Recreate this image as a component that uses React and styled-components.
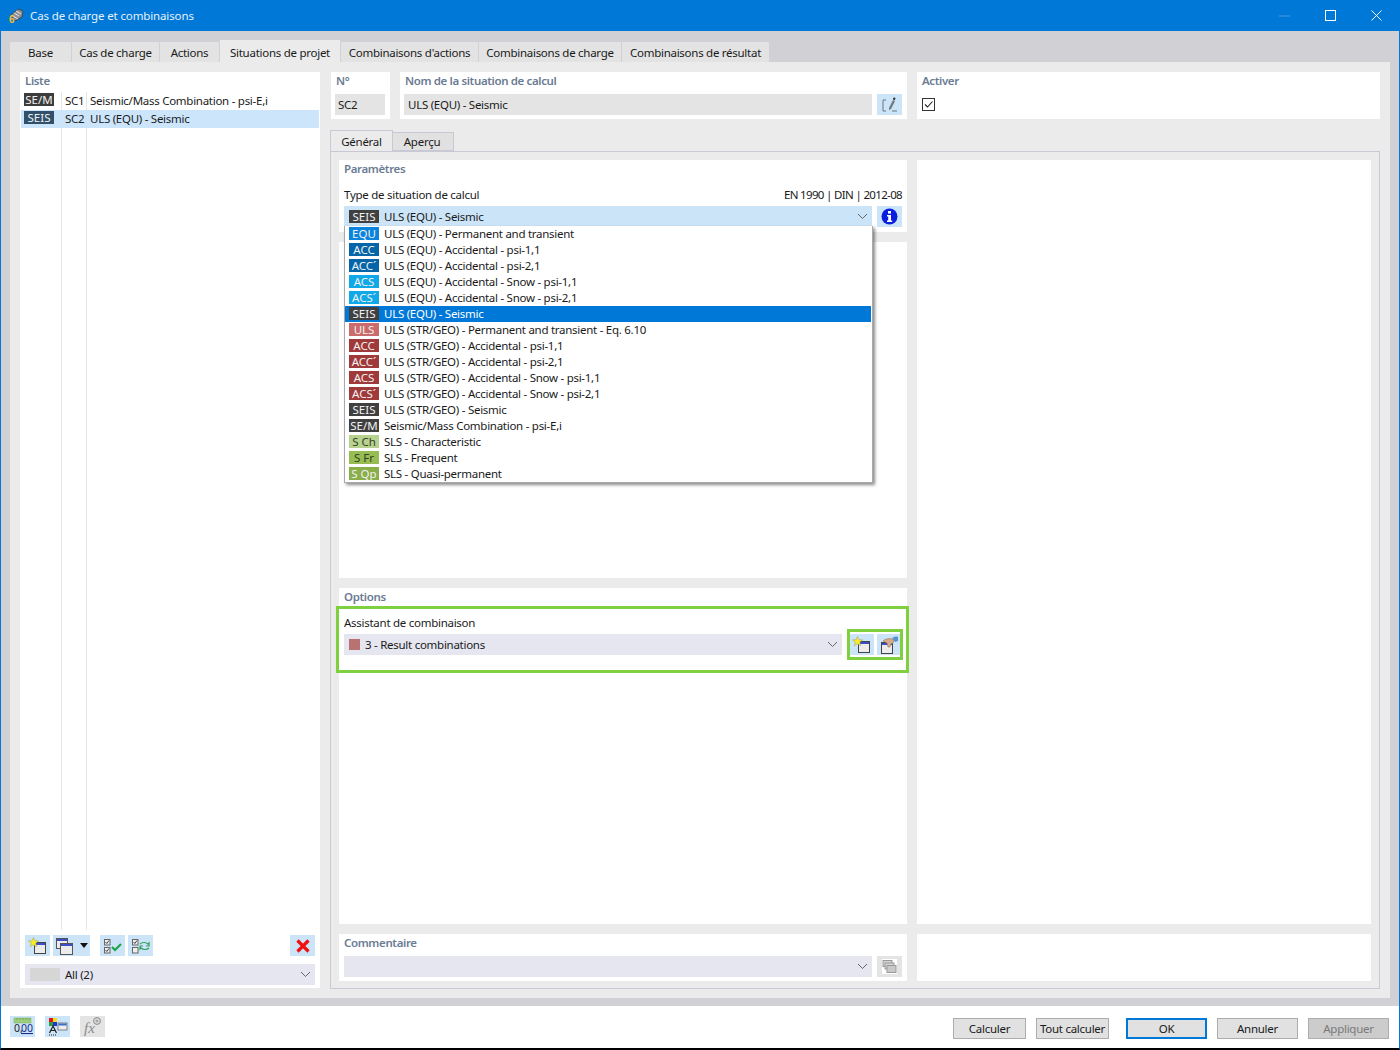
import React from "react";
import styled, { createGlobalStyle } from "styled-components";

const GlobalStyle = createGlobalStyle`
  html, body { margin: 0; padding: 0; background: #fff; }
  body { font-family: "Noto Sans", "Open Sans", sans-serif; font-size: 11.5px; letter-spacing: -0.27px; color: #1a1a1a; }
  * { box-sizing: border-box; }
  svg text { letter-spacing: 0; }
`;

const Window = styled.div`
  width: 1400px;
  height: 1050px;
  display: flex;
  flex-direction: column;
  border-left: 1px solid #0078d7;
  border-right: 1px solid #0078d7;
  border-bottom: 2px solid #000;
  background: #fff;
  overflow: hidden;
`;

const TitleBar = styled.div`
  height: 31px;
  flex: none;
  display: flex;
  align-items: center;
  background: #0078d7;
  color: #e6f1fb;
  letter-spacing: -0.13px;
  padding-left: 7px;
  gap: 5px;
`;

const TitleText = styled.span`
  flex: 1;
`;

const WinControls = styled.div`
  display: flex;
  align-items: center;
`;

const WinButton = styled.div`
  width: 46px;
  height: 31px;
  display: flex;
  align-items: center;
  justify-content: center;
`;

const Body = styled.div`
  flex: 1;
  display: flex;
  flex-direction: column;
  background: #d1d0d4;
  padding: 9px 9px 8px 9px;
  min-height: 0;
`;

const TabBar = styled.div`
  height: 22px;
  flex: none;
  display: flex;
  align-items: flex-end;
  gap: 1px;
`;

const Tab = styled.div`
  width: ${({ $w }) => $w}px;
  height: ${({ $active }) => ($active ? 22 : 20)}px;
  padding-top: ${({ $active }) => ($active ? 2 : 0)}px;
  background: ${({ $active }) => ($active ? "#ebebeb" : "#e3e3e3")};
  display: flex;
  align-items: center;
  justify-content: center;
`;

const Panel = styled.div`
  flex: 1;
  display: flex;
  gap: 10px;
  background: #ebebeb;
  padding: 10px 10px 9px 10px;
  min-height: 0;
`;

const Card = styled.div`
  background: #fff;
  display: flex;
  flex-direction: column;
  min-height: 0;
`;

const ListCard = styled(Card)`
  width: 300px;
  flex: none;
  margin-bottom: 1px;
`;

const GroupLabel = styled.div`
  height: 20px;
  flex: none;
  padding: 2px 0 0 5px;
  line-height: 14px;
  font-weight: 600;
  letter-spacing: -0.37px;
  color: #6b7b93;
`;

const ListArea = styled.div`
  flex: 1;
  margin: 0 1px;
  background-image:
    linear-gradient(#e6e6e6, #e6e6e6),
    linear-gradient(#e6e6e6, #e6e6e6);
  background-size: 1px 100%, 1px 100%;
  background-position: 40px 0, 65px 0;
  background-repeat: no-repeat;
`;

const ListRow = styled.div`
  height: 18px;
  padding-top: 1px;
  display: grid;
  grid-template-columns: 44px 25px 1fr;
  align-items: start;
  line-height: 16px;
  background: ${({ $selected }) => ($selected ? "#cce5fb" : "transparent")};
`;

const Badge = styled.span`
  width: 30px;
  height: 13px;
  flex: none;
  margin-left: ${({ $inset }) => $inset || 0}px;
  display: inline-flex;
  align-items: center;
  justify-content: center;
  background: ${({ $bg }) => $bg};
  color: ${({ $dark }) => ($dark ? "#33402a" : "#f2f2f2")};
  letter-spacing: 0;
  line-height: 13px;
  white-space: nowrap;
`;

const DropBadge = styled(Badge)`
  align-self: flex-start;
  margin-top: 1px;
`;

const ListToolbar = styled.div`
  flex: none;
  display: flex;
  align-items: center;
  gap: 3px;
  margin: 5px 5px 0;
  height: 21px;
`;

const Spacer = styled.div`
  flex: 1;
`;

const IconButton = styled.div`
  width: ${({ $w }) => $w || 25}px;
  height: 21px;
  flex: none;
  margin-left: ${({ $ml }) => $ml || 0}px;
  display: flex;
  align-items: center;
  justify-content: center;
  gap: ${({ $gap }) => $gap || 0}px;
  background: ${({ $muted }) => ($muted ? "#e4e4e4" : "#cce4f7")};
`;

const Combo = styled.div`
  height: ${({ $h }) => $h || 21}px;
  flex: 1;
  min-width: 0;
  display: flex;
  align-items: center;
  gap: 5px;
  padding: ${({ $h }) => ($h ? "1px 4px 0 5px" : "0 4px 0 5px")};
  background: ${({ $blue }) => ($blue ? "#cce4f7" : "#e6e6f0")};
`;

const ComboText = styled.span`
  flex: 1;
  line-height: 16px;
`;

const ListFilter = styled.div`
  flex: none;
  display: flex;
  margin: 8px 5px 3px;
`;

const Swatch = styled.span`
  width: ${({ $w }) => $w}px;
  height: ${({ $h }) => $h}px;
  flex: none;
  background: ${({ $bg }) => $bg};
`;

const Content = styled.div`
  flex: 1;
  display: flex;
  flex-direction: column;
  min-width: 0;
`;

const HeaderRow = styled.div`
  height: 47px;
  flex: none;
  display: flex;
  gap: 10px;
  margin-left: 1px;
`;

const NumberCard = styled(Card)`
  width: 59px;
  padding: 0 5px 0 4px;
`;

const NameCard = styled(Card)`
  width: 507px;
  padding: 0 5px 0 4px;
`;

const ActiveCard = styled(Card)`
  flex: 1;
  padding: 0 5px 0 4px;
`;

const HeaderLabel = styled(GroupLabel)`
  height: 22px;
  padding-left: 1px;
`;

const Field = styled.div`
  height: 21px;
  flex: 1;
  min-width: 0;
  display: flex;
  align-items: center;
  padding: 0 3px;
  background: #e4e4e4;
`;

const NameField = styled(Field)`
  padding-left: 4px;
`;

const FieldRow = styled.div`
  display: flex;
  gap: 5px;
`;

const CheckBox = styled.div`
  width: 13px;
  height: 13px;
  margin: 4px 0 0 1px;
  border: 1px solid #333;
  background: #fff;
  display: flex;
  align-items: center;
  justify-content: center;
`;

const SubTabBar = styled.div`
  height: 21px;
  margin-top: 11px;
  flex: none;
  display: flex;
  align-items: flex-end;
`;

const SubTab = styled.div`
  width: ${({ $w }) => $w}px;
  height: ${({ $active }) => ($active ? 21 : 19)}px;
  padding-right: ${({ $active }) => ($active ? 0 : 2)}px;
  display: flex;
  align-items: center;
  justify-content: center;
  background: ${({ $active }) => ($active ? "#ebebeb" : "#e1e1e1")};
  border: 1px solid #c9c9d6;
  border-bottom: ${({ $active }) => ($active ? "none" : "1px solid #c9c9d6")};
  border-left: ${({ $active }) => ($active ? "1px solid #c9c9d6" : "none")};
`;

const SubPanel = styled.div`
  flex: 1;
  display: grid;
  grid-template-columns: 568px 454px;
  grid-template-rows: 1fr 47px;
  gap: 10px;
  padding: 8px 8px 7px;
  border: 1px solid #c9c9d6;
  min-height: 0;
`;

const LeftStack = styled.div`
  display: flex;
  flex-direction: column;
  gap: 10px;
  min-height: 0;
`;

const ParamCard = styled(Card)`
  height: 72px;
  flex: none;
  position: relative;
  padding: 0 5px;
`;

const SectionLabel = styled(GroupLabel)`
  padding-left: 0;
  height: 27px;
`;

const ParamHead = styled.div`
  display: flex;
  justify-content: space-between;
  height: 19px;
  line-height: 16px;
`;

const NormText = styled.span`
  letter-spacing: -0.66px;
`;

const BlankCard = styled(Card)`
  height: 336px;
  flex: none;
`;

const OptionsCard = styled(Card)`
  flex: 1;
`;

const OptionsLabel = styled(GroupLabel)`
  height: 18px;
`;

const GreenFrame = styled.div`
  height: 67px;
  margin: 0 -2px 0 -3px;
  border: 3px solid #7fd03f;
  padding: 5px 3px 0 5px;
`;

const FrameLabel = styled.div`
  height: 20px;
  line-height: 18px;
`;

const FrameRow = styled.div`
  display: flex;
  align-items: center;
  gap: 5px;
`;

const GreenButtons = styled.div`
  flex: none;
  display: flex;
  gap: 3px;
  padding: 2px 0;
  margin: -5px 0;
  border: 3px solid #7fd03f;
`;

const CommentCard = styled(Card)`
  padding: 0 5px;
`;

const CommentLabel = styled(GroupLabel)`
  height: 22px;
  padding-left: 0;
`;

const DropList = styled.div`
  position: absolute;
  left: 5px;
  top: 66px;
  width: 529px;
  height: 257px;
  z-index: 5;
  background: #fff;
  border: 1px solid #a9a9a9;
  border-top: none;
  box-shadow: 2px 2px 3px rgba(0, 0, 0, 0.45);
`;

const DropRow = styled.div`
  height: 16px;
  display: flex;
  align-items: center;
  gap: 5px;
  padding-left: 4px;
  margin-right: 1px;
  background: ${({ $selected }) => ($selected ? "#0078d7" : "transparent")};
  color: ${({ $selected }) => ($selected ? "#fff" : "#1a1a1a")};
  line-height: 16px;
`;

const Footer = styled.div`
  height: 42px;
  flex: none;
  display: flex;
  align-items: center;
  padding: 0 10px 0 9px;
  background: #fff;
`;

const FooterIcons = styled.div`
  display: flex;
  gap: 10px;
  flex: 1;
  margin-top: -2px;
`;

const FooterButtons = styled.div`
  display: flex;
  margin-top: 2px;
`;

const Button = styled.div`
  width: ${({ $w }) => $w}px;
  height: 21px;
  margin-left: ${({ $ml }) => $ml}px;
  display: flex;
  align-items: center;
  justify-content: center;
  background: ${({ $disabled }) => ($disabled ? "#cccccc" : "#e1e1e1")};
  color: ${({ $disabled }) => ($disabled ? "#7a7a7a" : "#1a1a1a")};
  border: ${({ $primary }) => ($primary ? "2px solid #0078d7" : "1px solid #adadad")};
`;

const Chevron = () => (
  <svg width="11" height="7" viewBox="0 0 11 7">
    <path d="M1 1l4.5 4.5L10 1" fill="none" stroke="#666" strokeWidth="1" />
  </svg>
);

const AppIcon = () => (
  <svg width="17" height="18" viewBox="0 0 17 18">
    <path d="M3 8l7-6 5 2-1 6-7 4z" fill="#8b8f98" stroke="#3d3d3d" strokeWidth="0.8" />
    <path d="M6 6l5 3M8 4l5 3M5 9l5 3" stroke="#e5e5e5" strokeWidth="1" />
    <text x="1" y="16" fontSize="10" fontWeight="700" fill="#f2c230" fontFamily="Liberation Sans, sans-serif">6</text>
  </svg>
);

const MiniWindow = ({ x = 0, y = 0, w = 11, h = 11, bar = "#3d4fc4", stroke = "#444" }) => (
  <g>
    <rect x={x + 0.5} y={y + 0.5} width={w} height={h} fill="#ececec" stroke={stroke} />
    <rect x={x + 1} y={y + 1} width={w - 1} height="2" fill={bar} />
  </g>
);

const Star = () => (
  <path d="M5.5 0.5l1.4 3.2 3.6.2-2.8 2.3 1 3.5-3.2-1.9-3.2 1.9 1-3.5L.5 3.9l3.6-.2z" fill="#f8ee20" stroke="#9a9a70" strokeWidth="0.5" />
);

const NewWindowIcon = () => (
  <svg width="20" height="18" viewBox="0 0 20 18">
    <MiniWindow x={6} y={5} w={11} h={11} />
    <Star />
  </svg>
);

const CopyWindowIcon = () => (
  <svg width="18" height="18" viewBox="0 0 18 18">
    <MiniWindow x={1} y={1} w={11} h={10} stroke="#555" />
    <MiniWindow x={5} y={6} w={12} h={11} stroke="#555" />
  </svg>
);

const HandWindowIcon = () => (
  <svg width="20" height="18" viewBox="0 0 20 18">
    <path d="M13 2c2-1 4-2 6-1v4l-3 1z" fill="#5b93cf" />
    <MiniWindow x={2} y={6} w={11} h={11} />
    <path d="M4 5c2-2 6-3 9-2l2 1-1 3-2 1-1 3H9L8 7z" fill="#d7ab8c" stroke="#8a6a55" strokeWidth="0.5" />
  </svg>
);

const MiniCheck = ({ y, on = true }) => (
  <g>
    <rect x="1.5" y={y + 0.5} width="5.5" height="5.5" fill="#eee" stroke="#666" />
    {on && <path d={`M2.5 ${y + 3}l1.3 1.5L6 ${y + 1.5}`} fill="none" stroke="#333" strokeWidth="0.9" />}
  </g>
);

const CheckAllIcon = () => (
  <svg width="20" height="16" viewBox="0 0 20 16">
    <MiniCheck y={1} />
    <MiniCheck y={9} />
    <path d="M9 9l3 3 6-6" fill="none" stroke="#1aa548" strokeWidth="2.2" />
  </svg>
);

const SwapCheckIcon = () => (
  <svg width="20" height="16" viewBox="0 0 20 16">
    <MiniCheck y={1} />
    <MiniCheck y={9} on={false} />
    <path d="M9 6c2-2 6-2 8 0l1-1v3h-3M18 10c-2 2-6 2-8 0l-1 1V8h3" fill="none" stroke="#2f9e5a" strokeWidth="1.2" />
  </svg>
);

const DeleteIcon = () => (
  <svg width="14" height="14" viewBox="0 0 14 14">
    <path d="M1.5 1.5l11 11M12.5 1.5l-11 11" stroke="#f01010" strokeWidth="3.2" />
  </svg>
);

const EditIcon = () => (
  <svg width="18" height="16" viewBox="0 0 18 16">
    <path d="M5 3H2v11h3M11 14h5" fill="none" stroke="#6b7680" strokeWidth="1" />
    <path d="M12 3l2 1-4 8-2 1 0-2z" fill="#70787f" />
    <circle cx="13.2" cy="1.8" r="1.2" fill="#333" />
  </svg>
);

const InfoIcon = () => (
  <svg width="17" height="17" viewBox="0 0 17 17">
    <circle cx="8.5" cy="8.5" r="8" fill="#0a1ee0" />
    <rect x="7" y="3" width="3" height="2.6" fill="#fff" />
    <path d="M6 7h4v5.5h1.2V14H6v-1.5h1.2V8.4H6z" fill="#fff" />
  </svg>
);

const UnitsIcon = () => (
  <svg width="20" height="18" viewBox="0 0 20 18">
    <rect x="1" y="1" width="17" height="5" fill="#9ccf7c" stroke="#7fae62" strokeWidth="0.5" />
    <path d="M4 1v2M7 1v2M10 1v2M13 1v2M16 1v2" stroke="#5f8a45" strokeWidth="0.6" />
    <text x="1" y="15" fontSize="10.5" fill="#222" fontFamily="Noto Sans, sans-serif">0,</text>
    <text x="8" y="15" fontSize="10.5" fill="#1a2a8a" textDecoration="underline" fontFamily="Noto Sans, sans-serif">00</text>
  </svg>
);

const ColorsIcon = () => (
  <svg width="20" height="19" viewBox="0 0 20 19">
    <rect x="1" y="1" width="4" height="4" fill="#e01818" />
    <rect x="5" y="1" width="4" height="4" fill="#f2dc20" />
    <rect x="1" y="5" width="4" height="4" fill="#2f9e3a" />
    <rect x="5" y="5" width="4" height="4" fill="#2038d0" />
    <path d="M1.5 16L5 9l3.5 7M3 13.5h4" fill="none" stroke="#222" strokeWidth="1.2" />
    <path d="M1 18h8" stroke="#222" strokeDasharray="1 1" />
    <rect x="10" y="6" width="9" height="7" fill="#eee" stroke="#666" strokeWidth="0.8" />
    <rect x="10.5" y="6.5" width="8" height="2" fill="#3d6fc4" />
  </svg>
);

const FormulaIcon = () => (
  <svg width="22" height="20" viewBox="0 0 22 20">
    <circle cx="15" cy="5" r="3.4" fill="#ddd" stroke="#888" />
    <path d="M13.5 5h3M15 3.5v3" stroke="#888" strokeWidth="0.8" />
    <text x="2" y="17" fontSize="15" fontStyle="italic" fill="#8a8a8a" fontFamily="Liberation Serif, serif">fx</text>
  </svg>
);

const CommentIcon = () => (
  <svg width="15" height="15" viewBox="0 0 15 15">
    <rect x="0" y="0" width="15" height="15" fill="#fff" />
    <rect x="1" y="1.5" width="9" height="6" fill="#d4d4d4" stroke="#9a9a9a" />
    <rect x="3" y="4" width="9" height="6" fill="#d4d4d4" stroke="#9a9a9a" />
    <rect x="5" y="6.5" width="9" height="7" fill="#c8c8c8" stroke="#9a9a9a" />
  </svg>
);

const Caret = () => (
  <svg width="8" height="5" viewBox="0 0 8 5">
    <path d="M0 0h8L4 5z" fill="#111" />
  </svg>
);

const tabs = [
  ["Base", 61],
  ["Cas de charge", 87],
  ["Actions", 59],
  ["Situations de projet", 120, true],
  ["Combinaisons d'actions", 137],
  ["Combinaisons de charge", 142],
  ["Combinaisons de résultat", 147],
];

const situations = [
  ["EQU", "#0a84dc", "ULS (EQU) - Permanent and transient"],
  ["ACC", "#0465a8", "ULS (EQU) - Accidental - psi-1,1"],
  ["ACC´", "#0465a8", "ULS (EQU) - Accidental - psi-2,1"],
  ["ACS", "#0fa8e8", "ULS (EQU) - Accidental - Snow - psi-1,1"],
  ["ACS´", "#0fa8e8", "ULS (EQU) - Accidental - Snow - psi-2,1"],
  ["SEIS", "#404040", "ULS (EQU) - Seismic", true],
  ["ULS", "#cb6c6c", "ULS (STR/GEO) - Permanent and transient - Eq. 6.10"],
  ["ACC", "#a03a3a", "ULS (STR/GEO) - Accidental - psi-1,1"],
  ["ACC´", "#a03a3a", "ULS (STR/GEO) - Accidental - psi-2,1"],
  ["ACS", "#a03a3a", "ULS (STR/GEO) - Accidental - Snow - psi-1,1"],
  ["ACS´", "#a03a3a", "ULS (STR/GEO) - Accidental - Snow - psi-2,1"],
  ["SEIS", "#404040", "ULS (STR/GEO) - Seismic"],
  ["SE/M", "#404040", "Seismic/Mass Combination - psi-E,i"],
  ["S Ch", "#b6d28e", "SLS - Characteristic", false, true],
  ["S Fr", "#97bc52", "SLS - Frequent", false, true],
  ["S Qp", "#8aae48", "SLS - Quasi-permanent"],
];

const App = () => {
  return (
    <>
      <GlobalStyle />
      <Window>
        <TitleBar>
          <AppIcon />
          <TitleText>Cas de charge et combinaisons</TitleText>
          <WinControls>
            <WinButton>
              <svg width="11" height="2" viewBox="0 0 11 2"><path d="M0 1h11" stroke="#4a9ce2" /></svg>
            </WinButton>
            <WinButton>
              <svg width="11" height="11" viewBox="0 0 11 11"><rect x="0.5" y="0.5" width="10" height="10" fill="none" stroke="#fff" /></svg>
            </WinButton>
            <WinButton>
              <svg width="11" height="11" viewBox="0 0 11 11"><path d="M0.5 0.5l10 10M10.5 0.5l-10 10" stroke="#fff" /></svg>
            </WinButton>
          </WinControls>
        </TitleBar>
        <Body>
          <TabBar>
            {tabs.map(([label, w, active]) => (
              <Tab key={label} $w={w} $active={active}>{label}</Tab>
            ))}
          </TabBar>
          <Panel>
            <ListCard>
              <GroupLabel>Liste</GroupLabel>
              <ListArea>
                <ListRow>
                  <Badge $bg="#3c3c3c" $inset={3}>SE/M</Badge>
                  <span>SC1</span>
                  <span>Seismic/Mass Combination - psi-E,i</span>
                </ListRow>
                <ListRow $selected>
                  <Badge $bg="#30506c" $inset={3}>SEIS</Badge>
                  <span>SC2</span>
                  <span>ULS (EQU) - Seismic</span>
                </ListRow>
              </ListArea>
              <ListToolbar>
                <IconButton><NewWindowIcon /></IconButton>
                <IconButton $w={37} $gap={7}><CopyWindowIcon /><Caret /></IconButton>
                <IconButton $ml={7}><CheckAllIcon /></IconButton>
                <IconButton><SwapCheckIcon /></IconButton>
                <Spacer />
                <IconButton><DeleteIcon /></IconButton>
              </ListToolbar>
              <ListFilter>
                <Combo>
                  <Swatch $w={30} $h={13} $bg="#d6d6d6" />
                  <ComboText>All (2)</ComboText>
                  <Chevron />
                </Combo>
              </ListFilter>
            </ListCard>
            <Content>
              <HeaderRow>
                <NumberCard>
                  <HeaderLabel>N°</HeaderLabel>
                  <FieldRow><Field>SC2</Field></FieldRow>
                </NumberCard>
                <NameCard>
                  <HeaderLabel>Nom de la situation de calcul</HeaderLabel>
                  <FieldRow>
                    <NameField>ULS (EQU) - Seismic</NameField>
                    <IconButton><EditIcon /></IconButton>
                  </FieldRow>
                </NameCard>
                <ActiveCard>
                  <HeaderLabel>Activer</HeaderLabel>
                  <CheckBox>
                    <svg width="11" height="11" viewBox="0 0 11 11">
                      <path d="M2 5.5l2.5 2.5L9.5 2.5" fill="none" stroke="#222" strokeWidth="1.1" />
                    </svg>
                  </CheckBox>
                </ActiveCard>
              </HeaderRow>
              <SubTabBar>
                <SubTab $w={63} $active>Général</SubTab>
                <SubTab $w={61}>Aperçu</SubTab>
              </SubTabBar>
              <SubPanel>
                <LeftStack>
                  <ParamCard>
                    <SectionLabel>Paramètres</SectionLabel>
                    <ParamHead>
                      <span>Type de situation de calcul</span>
                      <NormText>EN 1990 | DIN | 2012-08</NormText>
                    </ParamHead>
                    <FieldRow>
                      <Combo $blue $h={20}>
                        <Badge $bg="#404040">SEIS</Badge>
                        <ComboText>ULS (EQU) - Seismic</ComboText>
                        <Chevron />
                      </Combo>
                      <IconButton><InfoIcon /></IconButton>
                    </FieldRow>
                    <DropList>
                      {situations.map(([code, bg, label, selected, dark]) => (
                        <DropRow key={label} $selected={selected}>
                          <DropBadge $bg={bg} $dark={dark}>{code}</DropBadge>
                          <span>{label}</span>
                        </DropRow>
                      ))}
                    </DropList>
                  </ParamCard>
                  <BlankCard />
                  <OptionsCard>
                    <OptionsLabel>Options</OptionsLabel>
                    <GreenFrame>
                      <FrameLabel>Assistant de combinaison</FrameLabel>
                      <FrameRow>
                        <Combo>
                          <Swatch $w={11} $h={11} $bg="#b87272" />
                          <ComboText>3 - Result combinations</ComboText>
                          <Chevron />
                        </Combo>
                        <GreenButtons>
                          <IconButton $w={24}><NewWindowIcon /></IconButton>
                          <IconButton $w={23}><HandWindowIcon /></IconButton>
                        </GreenButtons>
                      </FrameRow>
                    </GreenFrame>
                  </OptionsCard>
                </LeftStack>
                <Card />
                <CommentCard>
                  <CommentLabel>Commentaire</CommentLabel>
                  <FieldRow>
                    <Combo><ComboText /><Chevron /></Combo>
                    <IconButton $muted><CommentIcon /></IconButton>
                  </FieldRow>
                </CommentCard>
                <Card />
              </SubPanel>
            </Content>
          </Panel>
        </Body>
        <Footer>
          <FooterIcons>
            <IconButton><UnitsIcon /></IconButton>
            <IconButton><ColorsIcon /></IconButton>
            <IconButton $muted><FormulaIcon /></IconButton>
          </FooterIcons>
          <FooterButtons>
            <Button $w={73} $ml={0}>Calculer</Button>
            <Button $w={73} $ml={10}>Tout calculer</Button>
            <Button $w={81} $ml={17} $primary>OK</Button>
            <Button $w={81} $ml={10}>Annuler</Button>
            <Button $w={81} $ml={10} $disabled>Appliquer</Button>
          </FooterButtons>
        </Footer>
      </Window>
    </>
  );
};

export default App;
